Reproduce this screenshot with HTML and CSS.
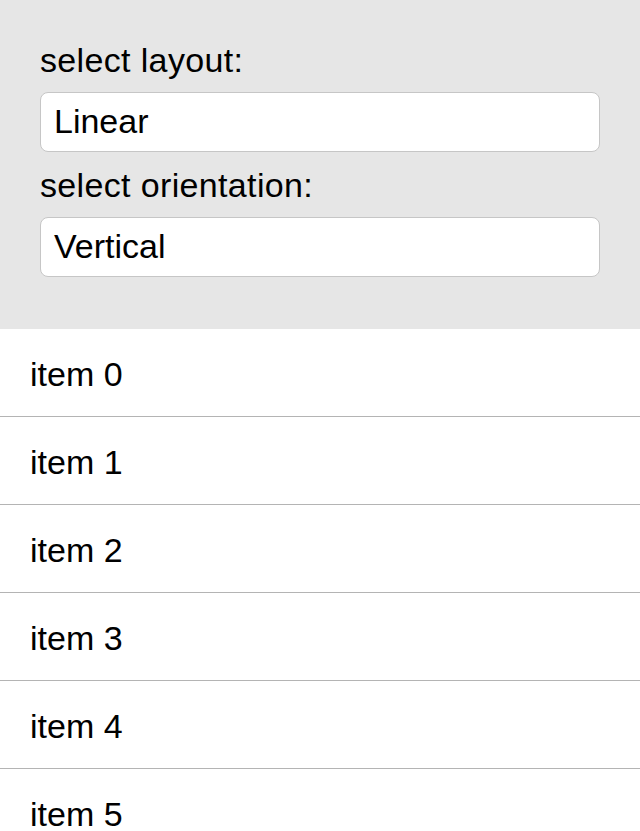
FILE: index.html
```html
<!DOCTYPE html>
<html>
<head>
<meta charset="utf-8">
<link rel="stylesheet" href="styles.css">
</head>
<body>
<div class="panel">
  <div class="label">select layout:</div>
  <div class="field">Linear</div>
  <div class="label second">select orientation:</div>
  <div class="field">Vertical</div>
</div>
<ul class="list">
  <li class="row">item 0</li>
  <li class="row">item 1</li>
  <li class="row">item 2</li>
  <li class="row">item 3</li>
  <li class="row">item 4</li>
  <li class="row">item 5</li>
</ul>
</body>
</html>
```
FILE: styles.css
```css
html, body {
  margin: 0;
  padding: 0;
  background: #ffffff;
  font-family: "Liberation Sans", Arial, sans-serif;
  font-size: 34px;
  color: #000000;
  overflow: hidden;
}
.panel {
  background: #e6e6e6;
  padding: 40px 40px 52px 40px;
  display: flex;
  flex-direction: column;
}
.label {
  height: 40px;
  line-height: 40px;
  margin-bottom: 12px;
  letter-spacing: 0.35px;
}
.label.second {
  margin-top: 13px;
}
.field {
  box-sizing: border-box;
  height: 60px;
  line-height: 56px;
  padding: 0 13px;
  background: #ffffff;
  border: 1px solid #c6c6c6;
  border-radius: 8px;
}
.list {
  list-style: none;
  margin: 0;
  padding: 0;
}
.row {
  box-sizing: border-box;
  height: 88px;
  padding: 26px 30px 0 30px;
  line-height: 39px;
  border-bottom: 1px solid #b4b4b4;
}
```
